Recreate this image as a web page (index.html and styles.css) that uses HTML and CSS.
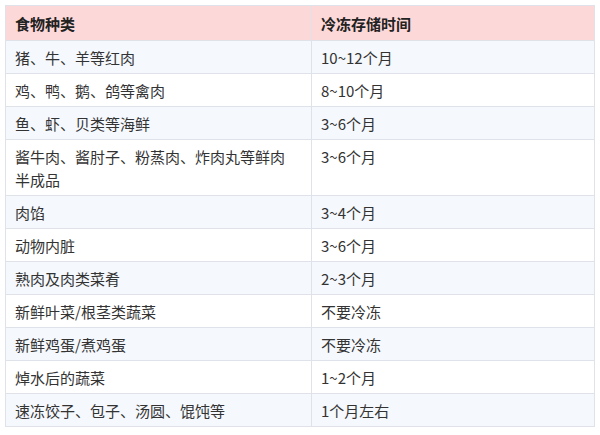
FILE: index.html
```html
<!DOCTYPE html>
<html lang="zh">
<head>
<meta charset="utf-8">
<link rel="stylesheet" href="styles.css">
</head>
<body>
<table class="tbl">
  <thead>
    <tr><th class="c1">食物种类</th><th>冷冻存储时间</th></tr>
  </thead>
  <tbody>
    <tr><td>猪、牛、羊等红肉</td><td>10~12个月</td></tr>
    <tr><td>鸡、鸭、鹅、鸽等禽肉</td><td>8~10个月</td></tr>
    <tr><td>鱼、虾、贝类等海鲜</td><td>3~6个月</td></tr>
    <tr><td>酱牛肉、酱肘子、粉蒸肉、炸肉丸等鲜肉半成品</td><td>3~6个月</td></tr>
    <tr><td>肉馅</td><td>3~4个月</td></tr>
    <tr><td>动物内脏</td><td>3~6个月</td></tr>
    <tr><td>熟肉及肉类菜肴</td><td>2~3个月</td></tr>
    <tr><td>新鲜叶菜/根茎类蔬菜</td><td>不要冷冻</td></tr>
    <tr><td>新鲜鸡蛋/煮鸡蛋</td><td>不要冷冻</td></tr>
    <tr><td>焯水后的蔬菜</td><td>1~2个月</td></tr>
    <tr><td>速冻饺子、包子、汤圆、馄饨等</td><td>1个月左右</td></tr>
  </tbody>
</table>
</body>
</html>
```
FILE: styles.css
```css
html, body {
  margin: 0;
  padding: 0;
  background: #ffffff;
}
body {
  padding: 5px;
  font-family: "Noto Sans CJK SC", "Noto Sans", sans-serif;
  font-size: 15px;
  color: #333333;
}
.tbl {
  width: 590px;
  border-collapse: collapse;
  table-layout: fixed;
}
.tbl th,
.tbl td {
  border: 1px solid #dfe2e8;
  text-align: left;
  vertical-align: top;
  line-height: 23px;
  padding: 5px 9px 4px 9px;
}
.tbl th {
  background: #fdd8d8;
  font-weight: bold;
  color: #222222;
  padding-top: 6px;
  padding-bottom: 5px;
}
.tbl .c1 {
  width: 274px;
}
.tbl th:first-child,
.tbl td:first-child {
  padding-right: 22px;
}
.tbl tbody tr:nth-child(odd) td {
  background: #f5f8fd;
}
.tbl tbody tr:nth-child(even) td {
  background: #ffffff;
}
```
